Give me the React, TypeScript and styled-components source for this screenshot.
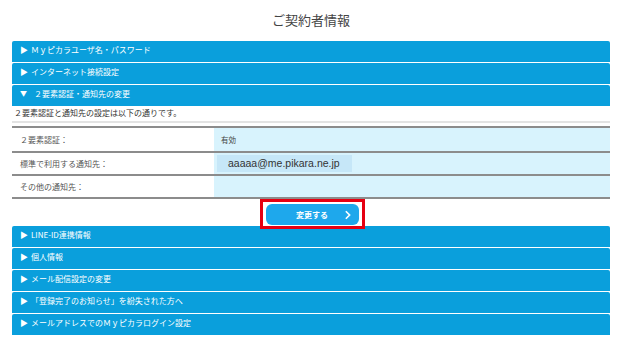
import React from "react";
import styled, { createGlobalStyle } from "styled-components";

const GlobalStyle = createGlobalStyle`
  body {
    margin: 0;
    background: #ffffff;
    font-family: "Noto Sans CJK JP", "Noto Sans", sans-serif;
    color: #333;
  }
`;

const topItems = ["Ｍｙピカラユーザ名・パスワード", "インターネット接続設定"];

const bottomItems = [
  "LINE-ID連携情報",
  "個人情報",
  "メール配信設定の変更",
  "「登録完了のお知らせ」を紛失された方へ",
  "メールアドレスでのＭｙピカラログイン設定",
];

function App() {
  return (
    <Page>
      <GlobalStyle />
      <Title>ご契約者情報</Title>

      {topItems.map((label) => (
        <Bar key={label}>
          <Arrow>▶</Arrow>
          {label}
        </Bar>
      ))}

      <Bar>
        <Arrow open>▼</Arrow>
        ２要素認証・通知先の変更
      </Bar>
      <Panel>
        <Desc>２要素認証と通知先の設定は以下の通りです。</Desc>
        <Table>
          <Row first>
            <Label>２要素認証：</Label>
            <Value>有効</Value>
          </Row>
          <Row>
            <Label>標準で利用する通知先：</Label>
            <Value>
              <Mail>aaaaa@me.pikara.ne.jp</Mail>
            </Value>
          </Row>
          <Row>
            <Label>その他の通知先：</Label>
            <Value />
          </Row>
        </Table>
        <ButtonRow>
          <Highlight>
            <ChangeButton>
              <span>変更する</span>
              <Chevron viewBox="0 0 8 12">
                <path d="M2 1.5 L6.5 6 L2 10.5" fill="none" stroke="#fff" strokeWidth="2" />
              </Chevron>
            </ChangeButton>
          </Highlight>
        </ButtonRow>
      </Panel>

      {bottomItems.map((label) => (
        <Bar key={label}>
          <Arrow>▶</Arrow>
          {label}
        </Bar>
      ))}
    </Page>
  );
}

export default App;

const Page = styled.div`
  width: 598px;
  margin: 0 auto;
`;

const Title = styled.h1`
  margin: 0;
  height: 41px;
  line-height: 40px;
  text-align: center;
  font-size: 13px;
  font-weight: normal;
  color: #444;
`;

const Bar = styled.div`
  display: flex;
  align-items: flex-start;
  height: 21px;
  box-sizing: border-box;
  margin-bottom: 1px;
  padding: 3px 8px 0;
  background: #0a9fdc;
  border-radius: 2px 2px 0 0;
  color: #fff;
  font-size: 8px;
  line-height: 11px;
  font-weight: normal;
`;

const Arrow = styled.span<{ open?: boolean }>`
  width: ${(p) => (p.open ? "14px" : "11px")};
  font-size: ${(p) => (p.open ? "7px" : "8px")};
`;

const Panel = styled.div`
  margin-top: -1px;
`;

const Desc = styled.div`
  height: 14px;
  padding-left: 2px;
  font-size: 8px;
  line-height: 14px;
  color: #333;
`;

const Table = styled.div`
  margin-top: 1px;
  border-top: 2px solid #e3e3e3;
  padding-top: 3px;
`;

const Row = styled.div<{ first?: boolean }>`
  display: grid;
  grid-template-columns: 202px 1fr;
  height: ${(p) => (p.first ? "23px" : "21px")};
  border-top: 2px solid #8c8c8c;
  &:last-child {
    border-bottom: 2px solid #8c8c8c;
  }
`;

const Label = styled.div`
  display: flex;
  align-items: center;
  padding-left: 8px;
  font-size: 8px;
  color: #555;
`;

const Value = styled.div`
  display: flex;
  align-items: center;
  padding-left: 7px;
  background: #d8f3fd;
  font-size: 7.5px;
  color: #444;
`;

const Mail = styled.span`
  display: block;
  margin-left: -4px;
  width: 135px;
  height: 17px;
  box-sizing: border-box;
  padding-left: 11px;
  background: #c6e7f8;
  font-family: "Liberation Sans", Arial, sans-serif;
  font-size: 10.5px;
  line-height: 17px;
  color: #333;
`;

const ButtonRow = styled.div`
  display: flex;
  justify-content: center;
  height: 27px;
  padding-left: 3px;
`;

const Highlight = styled.div`
  position: relative;
  z-index: 1;
  height: 30px;
  box-sizing: border-box;
  border: 3px solid #e60012;
  padding: 2px 3px 0;
`;

const ChangeButton = styled.button`
  display: flex;
  align-items: center;
  justify-content: space-between;
  width: 93px;
  height: 21px;
  padding: 0 8px 0 30px;
  border: none;
  border-radius: 6px;
  background: #1ea8ec;
  color: #fff;
  font-family: "Noto Sans CJK JP", sans-serif;
  font-size: 8px;
  font-weight: bold;
`;

const Chevron = styled.svg`
  width: 7px;
  height: 10px;
`;
